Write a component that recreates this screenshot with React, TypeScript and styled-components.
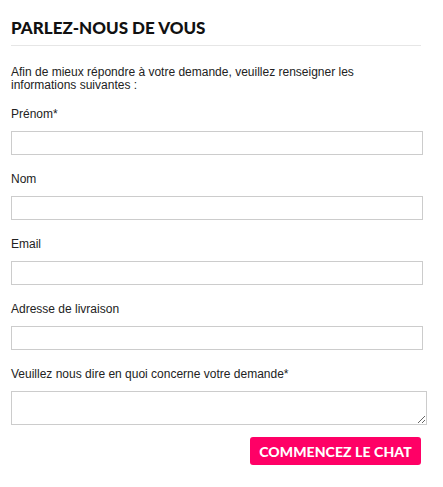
import styled, { createGlobalStyle } from 'styled-components';

const GlobalStyle = createGlobalStyle`
  html, body {
    margin: 0;
    padding: 0;
    background: #ffffff;
  }
  body {
    font-family: "Liberation Sans", Arial, sans-serif;
    color: #222222;
  }
  * {
    box-sizing: border-box;
  }
`;

const fields = [
  { id: 'prenom', label: 'Prénom*' },
  { id: 'nom', label: 'Nom' },
  { id: 'email', label: 'Email' },
  { id: 'adresse', label: 'Adresse de livraison' },
];

const App = () => {
  return (
    <>
      <GlobalStyle />
      <StFormWrap>
        <StTitle>Parlez-nous de vous</StTitle>
        <StIntro>
          Afin de mieux répondre à votre demande, veuillez renseigner les
          <br />
          informations suivantes :
        </StIntro>
        {fields.map(field => (
          <StField key={field.id}>
            <StLabel htmlFor={field.id}>{field.label}</StLabel>
            <StInput id={field.id} type="text" />
          </StField>
        ))}
        <StField>
          <StLabel htmlFor="demande">Veuillez nous dire en quoi concerne votre demande*</StLabel>
          <StTextarea id="demande" />
        </StField>
        <StActions>
          <StButton type="button">Commencez le chat</StButton>
        </StActions>
      </StFormWrap>
    </>
  );
};

export default App;

const StFormWrap = styled.div`
  width: 443px;
  padding: 18px 22px 0 11px;
  display: flex;
  flex-direction: column;
`;

const StTitle = styled.h2`
  margin: 0;
  padding-bottom: 7px;
  border-bottom: 1px solid #e6e6e6;
  font-family: Lato, "Noto Sans", sans-serif;
  font-weight: 900;
  font-size: 17px;
  line-height: 20px;
  letter-spacing: 0;
  text-transform: uppercase;
  color: #111111;
`;

const StIntro = styled.p`
  margin: 20px 0 15px;
  font-size: 12px;
  line-height: 13px;
  color: #222222;
`;

const StField = styled.div`
  display: flex;
  flex-direction: column;
  margin-bottom: 17px;
`;

const StLabel = styled.label`
  display: block;
  font-size: 12px;
  line-height: 14px;
  margin-bottom: 10px;
  color: #222222;
`;

const StInput = styled.input`
  width: 412px;
  height: 24px;
  border: 1px solid #cccccc;
  border-radius: 0;
  padding: 2px 5px;
  font-family: "Liberation Sans", Arial, sans-serif;
  font-size: 12px;
  outline: none;
`;

const StTextarea = styled.textarea`
  width: 416px;
  height: 34px;
  border: 1px solid #cccccc;
  border-radius: 0;
  padding: 2px 5px;
  font-family: "Liberation Sans", Arial, sans-serif;
  font-size: 12px;
  resize: both;
  outline: none;
`;

const StActions = styled.div`
  display: flex;
  justify-content: flex-end;
  margin-top: -5px;
`;

const StButton = styled.button`
  width: 171px;
  height: 28px;
  border: none;
  border-radius: 3px;
  background: #ff0066;
  color: #ffffff;
  font-family: Lato, "Noto Sans", sans-serif;
  font-weight: 900;
  font-size: 14px;
  letter-spacing: 0.1px;
  text-transform: uppercase;
  cursor: pointer;
  padding: 0;
`;
